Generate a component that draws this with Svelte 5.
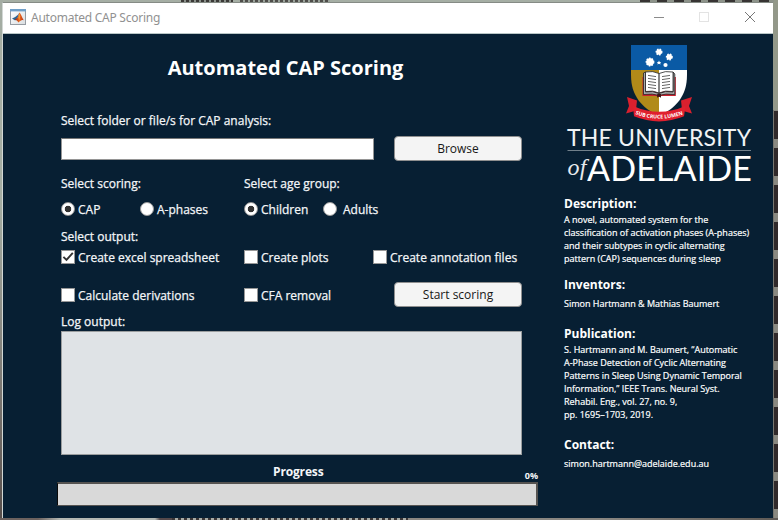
<script>
  let scoring = $state('CAP');
  let age = $state('Children');
  let outputs = $state({ excel: true, plots: false, annotations: false, derivations: false, cfa: false });
</script>

{#snippet radio(label, checked, pick)}
  <button class="choice" class:wide={label === 'Adults'} role="radio" aria-checked={checked} onclick={pick}>
    <span class="dot" class:on={checked}></span><span class="text">{label}</span>
  </button>
{/snippet}

{#snippet check(label, key)}
  <button class="choice" role="checkbox" aria-checked={outputs[key]} onclick={() => (outputs[key] = !outputs[key])}>
    <span class="box">
      {#if outputs[key]}
        <svg width="12" height="12" viewBox="0 0 12 12"><path d="M1.4 5.8 L4.5 8.9 L10.8 1.9" fill="none" stroke="#333" stroke-width="1.9" /></svg>
      {/if}
    </span><span class="text">{label}</span>
  </button>
{/snippet}

<div class="desktop">
  <div class="window">
    <header>
      <svg class="appicon" width="16" height="16" viewBox="0 0 16 16">
        <defs>
          <linearGradient id="frame" x1="0" y1="0" x2="1" y2="1"><stop offset="0" stop-color="#fff" /><stop offset="1" stop-color="#d9dde0" /></linearGradient>
          <linearGradient id="peak" x1="0" y1="0" x2="1" y2="0"><stop offset="0" stop-color="#8b1a10" /><stop offset=".5" stop-color="#ef6a1c" /><stop offset="1" stop-color="#b52c12" /></linearGradient>
        </defs>
        <rect x=".5" y=".5" width="15" height="15" fill="url(#frame)" stroke="#969ca3" />
        <rect x="0" y="0" width="16" height="2.4" fill="#6f9fc8" />
        <path d="M2 9.5 L5.2 8 L8 5.7 L9.4 3.8 L7.5 9 L5.2 11.5 Z" fill="#2d6594" />
        <path d="M4.6 11 L7.6 8.4 L9.4 3.6 C10.8 4.4 12 9 14 11.5 C12 10.4 11 11.2 8.3 13.5 C7.5 11.5 6.3 11 4.6 11 Z" fill="url(#peak)" />
        <path d="M9.3 4.3 L10.2 7.4 L9.2 11.5 L8.4 8.5 Z" fill="#f5a13a" />
      </svg>
      <span class="caption">Automated CAP Scoring</span>
      <svg class="controls" width="120" height="30" viewBox="0 0 120 30" shape-rendering="crispEdges" fill="none">
        <path d="M11 14.5 H21" stroke="#8b8b8b" />
        <rect x="56.5" y="9.5" width="9" height="9" stroke="#e3e3e3" />
        <path d="M102 9 L112 19 M112 9 L102 19" stroke="#777" stroke-width="1" shape-rendering="auto" />
      </svg>
    </header>

    <div class="body">
      <main>
        <h1>Automated CAP Scoring</h1>
        <div class="label first">Select folder or file/s for CAP analysis:</div>
        <div class="row file">
          <input type="text" aria-label="Path" />
          <button class="push">Browse</button>
        </div>
        <div class="row groups">
          <div class="label">Select scoring:</div>
          <div class="label">Select age group:</div>
        </div>
        <div class="row radios">
          {@render radio('CAP', scoring === 'CAP', () => (scoring = 'CAP'))}
          {@render radio('A-phases', scoring === 'A-phases', () => (scoring = 'A-phases'))}
          {@render radio('Children', age === 'Children', () => (age = 'Children'))}
          {@render radio('Adults', age === 'Adults', () => (age = 'Adults'))}
        </div>
        <div class="label output">Select output:</div>
        <div class="row checks">
          {@render check('Create excel spreadsheet', 'excel')}
          {@render check('Create plots', 'plots')}
          {@render check('Create annotation files', 'annotations')}
        </div>
        <div class="row checks second">
          {@render check('Calculate derivations', 'derivations')}
          {@render check('CFA removal', 'cfa')}
          <button class="push start">Start scoring</button>
        </div>
        <div class="label loglabel">Log output:</div>
        <div class="log"></div>
        <div class="progresshead"><span></span><b>Progress</b><span class="pct">0%</span></div>
        <div class="bar"></div>
      </main>

      <aside>
        <svg class="logo" width="190" height="152" viewBox="564 40 190 152">
          <defs><clipPath id="shield"><path d="M631 45 H687 V75 C687 96 676 108 659 116 C642 108 631 96 631 75 Z" /></clipPath></defs>
          <g clip-path="url(#shield)">
            <rect x="631" y="45" width="56" height="25" fill="#0a5aa5" />
            <rect x="631" y="70" width="28" height="48" fill="#b18a19" />
            <rect x="659" y="70" width="28" height="48" fill="#fff" />
          </g>
          <g fill="none" stroke="#fff" stroke-width="1.6" stroke-dasharray="1.5 1.1">
            <circle cx="659" cy="52" r="2.7" /><circle cx="669.3" cy="57" r="2.7" /><circle cx="650" cy="62" r="3.6" />
          </g>
          <g fill="#fff">
            <circle cx="659" cy="52" r="2.8" /><circle cx="669.3" cy="57" r="2.8" /><circle cx="650" cy="62" r="3.8" /><circle cx="665.5" cy="65" r="2.1" />
            <path d="M659 60.5 l.7 1.4 1.5.1 -1 1.1 .4 1.5 -1.6-.8 -1.6.8 .4-1.5 -1-1.1 1.5-.1z" />
          </g>
          <path d="M642.5 77 H675.8 V96 H661 V97 H657 V96 H642.5 Z" fill="#c91f2d" />
          <path d="M643.5 73 L645.5 72 V92 Q653 90.5 659 93.5 Q665 90.5 673 92 V72 L674.8 74 V94.5 Q665 93.2 659 95.5 Q653 93.2 643.5 94.5 Z" fill="#aaa" stroke="#252525" stroke-width=".8" />
          <path d="M645.5 72 Q653 70.5 659 73.5 Q665 70.5 673 72 V91.5 Q665 90 659 93 Q653 90 645.5 91.5 Z" fill="#fff" stroke="#222" stroke-width=".8" />
          <path d="M659 73.5 V93" stroke="#222" stroke-width="1.1" />
          <path d="M648 75.4 l8 1.2 M648 78.4 l8 1.2 M648 81.4 l8 1.2 M648 84.4 l8 1.2 M648 87.4 l8 1.2 M662 76.6 l8-1.2 M662 79.6 l8-1.2 M662 82.6 l8-1.2 M662 85.6 l8-1.2 M662 88.6 l8-1.2" stroke="#555" stroke-width=".9" />
          <path d="M657.2 94 h3.8 v3.8 l-1.9-1.3 -1.9 1.3z" fill="#3b1518" />
          <path d="M627 97 L637 100.5 L636 110 L633 111.5 L626 113.5 L629 106 Z M692 97 L681 100.5 L682 110 L685 111.5 L692 113.5 L689 106 Z" fill="#d9202e" />
          <path d="M633 106 Q659 117.5 685.5 106 L684 116.3 Q659 126.5 634 116.3 Z" fill="#e0202e" />
          <path id="motto" d="M634 113.6 Q659 123.6 685 113.6" fill="none" />
          <text font-family="Open Sans, sans-serif" font-weight="700" font-size="5.2" fill="#fff"><textPath href="#motto" startOffset="1.2" textLength="49">SUB CRUCE LUMEN</textPath></text>
          <text class="uni" x="567" y="146" textLength="184">THE UNIVERSITY</text>
          <path d="M567.5 150.5 H751" stroke="#71808b" />
          <text class="of" x="567.5" y="175" textLength="19">of</text>
          <text class="ade" x="587" y="180.5" textLength="165">ADELAIDE</text>
        </svg>

        <h2 class="h-desc">Description:</h2>
        <p>A novel, automated system for the<br />classification of activation phases (A-phases)<br />and their subtypes in cyclic alternating<br />pattern (CAP) sequences during sleep</p>
        <h2 class="h-inv">Inventors:</h2>
        <p class="gap">Simon Hartmann &amp; Mathias Baumert</p>
        <h2 class="h-pub">Publication:</h2>
        <p>S. Hartmann and M. Baumert, “Automatic<br />A-Phase Detection of Cyclic Alternating<br />Patterns in Sleep Using Dynamic Temporal<br />Information,” IEEE Trans. Neural Syst.<br />Rehabil. Eng., vol. 27, no. 9,<br />pp. 1695–1703, 2019.</p>
        <h2 class="h-con">Contact:</h2>
        <p class="gap">simon.hartmann@adelaide.edu.au</p>
      </aside>
    </div>
  </div>
</div>

<style>
  :global(body) { margin: 0; overflow: hidden; }
  * { box-sizing: border-box; }
  button { font: inherit; color: inherit; margin: 0; }
  .desktop {
    width: 778px; height: 520px; padding: 2px 5px 2px 2px; overflow: hidden;
    font-family: "Open Sans", "Noto Sans", sans-serif;
    background:
      repeating-linear-gradient(90deg, #3b3937 0 3px, #8b918b 3px 5px) 181px 0 / 52px 2px no-repeat,
      repeating-linear-gradient(90deg, #4e4d49 0 3px, #9ba39b 3px 5px) 240px 0 / 90px 2px no-repeat,
      repeating-linear-gradient(90deg, #373433 0 10px, #8d938a 10px 17px) 640px 0 / 134px 2px no-repeat,
      repeating-linear-gradient(90deg, #3c3636 0 3px, #a7aaa5 3px 6px) 172px 518px / 236px 2px no-repeat,
      linear-gradient(90deg, #6c625f 0 38px, #b4b8b3 60px 155px, #55494b 160px 172px, #8a8782 408px 600px, #5f5a56) 0 518px / 778px 2px no-repeat,
      linear-gradient(#939889 0 110px, transparent 110px) 773px 0 / 5px 520px no-repeat,
      linear-gradient(90deg, #77766f 0 1px, transparent 1px) 773px 0 / 5px 520px no-repeat,
      repeating-linear-gradient(#30292a 0 28px, #8a8981 28px 37px) 773px 0 / 5px 520px no-repeat,
      linear-gradient(#a4ada3 0 200px, #77736e 400px, #554d4a) 0 0 / 3px 520px no-repeat,
      #a5aea4;
  }
  .window { width: 771px; height: 516px; border: 1px solid #858b85; border-left-color: #d2d7d5; border-right: 0; border-bottom: 0; display: flex; flex-direction: column; background: #071f33; }
  header { height: 31px; flex: none; background: #fff; border-bottom: 1px solid #b9c6c6; display: flex; align-items: center; padding-left: 7px; }
  .appicon { margin-top: -2px; }
  .caption { font-family: "Noto Sans", sans-serif; font-size: 12px; color: #919191; margin-left: 5px; margin-top: -1px; flex: 1; letter-spacing: -0.25px; }
  .controls { margin-right: 10px; }
  .body { flex: 1; display: flex; color: #f4f6f8; }
  main { width: 561px; padding-left: 58px; font-size: 12px; display: flex; flex-direction: column; -webkit-text-stroke: 0.25px currentColor; }
  h1 { width: 449px; margin: 19px 0 0; text-align: center; font-size: 20px; line-height: 30px; font-weight: 700; color: #fff; -webkit-text-stroke: 0; }
  .label { height: 18px; line-height: 18px; white-space: nowrap; }
  .first { margin-top: 29px; }
  .row { display: grid; }
  .file { grid-template-columns: 313px 128px; column-gap: 20px; align-items: center; margin-top: 6px; height: 25px; }
  input { width: 313px; height: 22px; border: 1px solid #959595; border-top-color: #777; background: #fff; padding: 0 4px; margin: 1px 0 0; }
  .push { width: 128px; height: 25px; border: 1px solid #8f8f8f; border-radius: 4px; background: #f4f4f4; color: #171717; padding: 0; line-height: 22px; -webkit-text-stroke: 0; }
  .groups { grid-template-columns: 183px 1fr; margin-top: 14px; }
  .radios { grid-template-columns: 79px 104px 79px 1fr; margin-top: 7px; }
  .choice { display: flex; align-items: center; gap: 3px; height: 18px; line-height: 18px; padding: 0; border: 0; background: none; white-space: nowrap; }
  .wide { gap: 6px; }
  .radios .text, .second .text { padding-top: 2px; }
  .dot, .box { width: 14px; height: 14px; flex: none; background: #fff; border: 1px solid #979797; }
  .dot { border-radius: 50%; }
  .on { background: radial-gradient(circle, #333 0 3px, #fff 3.6px); }
  .box { display: flex; align-items: center; justify-content: center; margin-top: -2px; }
  .output { margin-top: 10px; }
  .checks { grid-template-columns: 183px 129px 1fr; margin-top: 3px; align-items: center; height: 18px; }
  .second { grid-template-columns: 183px 150px 1fr; margin-top: 15px; height: 25px; padding-top: 1px; }
  .second .box { margin-top: -1px; }
  .start { margin-top: -1px; }
  .loglabel { margin-top: 5px; padding-top: 1px; }
  .log { width: 461px; height: 124px; margin-top: 1px; background: #dfe3e6; border: 1px solid #9a9d9e; }
  .progresshead { display: grid; grid-template-columns: 212px 62px 203px; align-items: center; height: 27px; padding-top: 6px; -webkit-text-stroke: 0; }
  .progresshead b { font-weight: 700; font-size: 12px; letter-spacing: -0.15px; white-space: nowrap; }
  .pct { font-size: 9px; font-weight: 700; text-align: right; padding-top: 8px; }
  .bar { width: 481px; height: 24px; margin-left: -4px; background: #d9d9d9; border: 2px solid #555351; border-left: 1px solid #0a0a0a; border-bottom-width: 1px; }
  aside { flex: 1; display: flex; flex-direction: column; color: #fff; }
  .logo { margin-top: 6px; flex: none; }
  .uni { font-family: Lato, sans-serif; font-weight: 400; font-size: 23px; fill: #f1f3f5; }
  .of { font-family: "Liberation Serif", serif; font-style: italic; font-size: 24px; fill: #e6eaed; }
  .ade { font-family: Lato, sans-serif; font-weight: 400; font-size: 34px; fill: #fff; }
  h2 { margin: 0; font-size: 12px; line-height: 18px; font-weight: 700; }
  .h-desc { margin-top: 3px; }
  p { margin: 0; font-size: 9px; line-height: 13px; white-space: nowrap; -webkit-text-stroke: 0.2px currentColor; }
  .gap { margin-top: 3px; }
  .h-inv { margin-top: 11px; }
  .h-pub { margin-top: 15px; }
  .h-con { margin-top: 15px; }
</style>
